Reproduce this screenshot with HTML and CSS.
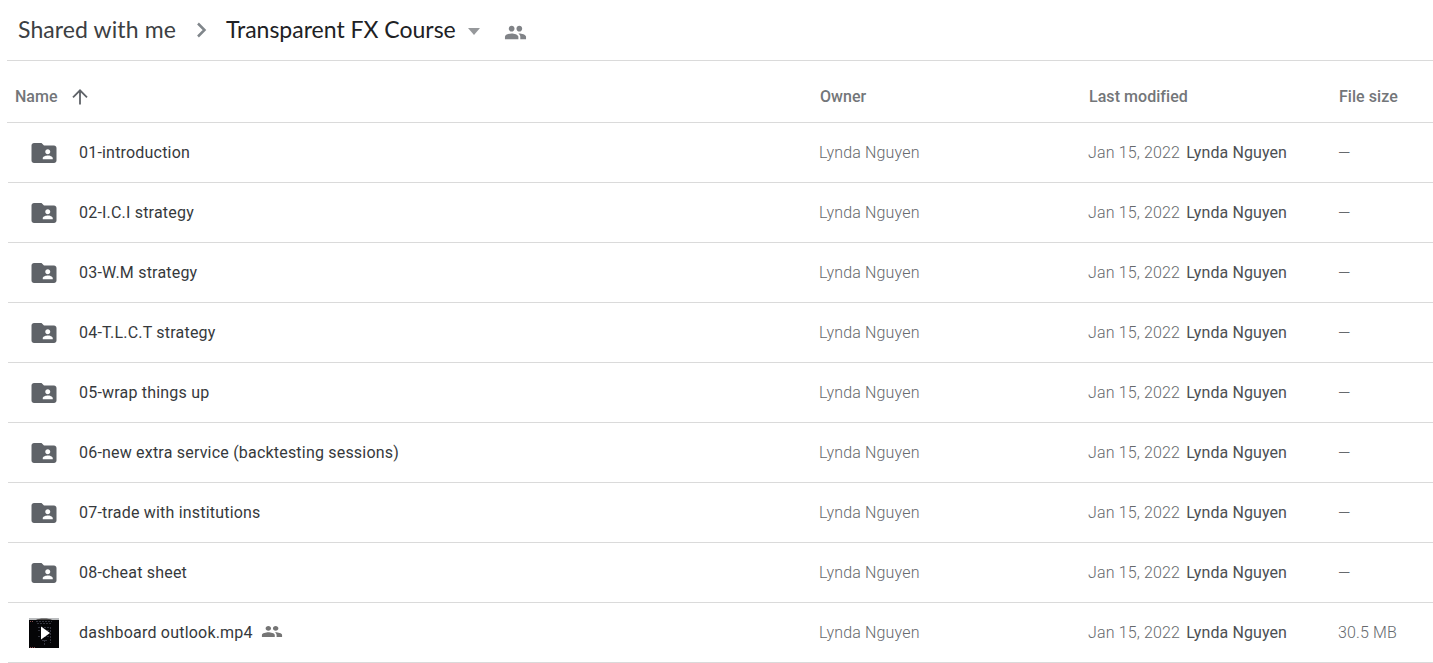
FILE: index.html
```html
<!DOCTYPE html>
<html lang="en">
<head>
    <meta charset="UTF-8">
    <meta name="viewport" content="width=device-width, initial-scale=1.0">
    <title>Transparent FX Course</title>
    <link rel="stylesheet" href="styles.css">
</head>
<body>
    <!-- shared icons -->
    <svg class="sprite">
        <symbol id="folder" viewBox="0 0 24 24">
            <path d="M20 6h-8l-2-2H4c-1.100 0-1.990.9-1.990 2L2 18c0 1.100.9 2 2 2h16c1.100 0 2-.9 2-2V8c0-1.100-.9-2-2-2zm-5 3c1.100 0 2 .9 2 2s-.9 2-2 2-2-.9-2-2 .9-2 2-2zm4 8h-8v-1c0-1.330 2.670-2 4-2s4 .67 4 2v1z"/>
        </symbol>
        <symbol id="people" viewBox="0 0 24 24" preserveAspectRatio="none">
            <path d="M16 11c1.660 0 2.990-1.340 2.990-3S17.660 5 16 5s-3 1.340-3 3 1.340 3 3 3zm-8 0c1.660 0 2.990-1.340 2.990-3S9.660 5 8 5 5 6.340 5 8s1.340 3 3 3zm0 2c-2.330 0-7 1.170-7 3.500V19h14v-2.500c0-2.330-4.670-3.500-7-3.500zm8 0c-.29 0-.62.02-.97.05 1.160.84 1.970 1.970 1.970 3.450V19h6v-2.500c0-2.330-4.670-3.500-7-3.500z"/>
        </symbol>
    </svg>

    <div class="breadcrumb">
        <span class="crumb">Shared with me</span>
        <svg class="chevron" viewBox="0 0 12 16"><path d="M2 1.500l6.500 6.500L2 14.500"/></svg>
        <span class="crumb current">Transparent FX Course</span>
        <svg class="caret" viewBox="0 0 12 7"><path d="M0 0h12L6 7z"/></svg>
        <svg class="people"><use href="#people"/></svg>
    </div>

    <div class="files">
        <div class="row head">
            <div class="name">Name
                <svg class="arrow" viewBox="0 0 16 16"><path d="M8 15.500V1.500M1 8.300l7-7 7 7"/></svg>
            </div>
            <div class="owner">Owner</div>
            <div class="modified">Last modified</div>
            <div class="size">File size</div>
        </div>
        <div class="row">
            <div class="name"><svg class="folder"><use href="#folder"/></svg><span>01-introduction</span></div>
            <div class="owner">Lynda Nguyen</div>
            <div class="modified">Jan 15, 2022 <span class="by">Lynda Nguyen</span></div>
            <div class="size"><span class="dash">—</span></div>
        </div>
        <div class="row">
            <div class="name"><svg class="folder"><use href="#folder"/></svg><span>02-I.C.I strategy</span></div>
            <div class="owner">Lynda Nguyen</div>
            <div class="modified">Jan 15, 2022 <span class="by">Lynda Nguyen</span></div>
            <div class="size"><span class="dash">—</span></div>
        </div>
        <div class="row">
            <div class="name"><svg class="folder"><use href="#folder"/></svg><span>03-W.M strategy</span></div>
            <div class="owner">Lynda Nguyen</div>
            <div class="modified">Jan 15, 2022 <span class="by">Lynda Nguyen</span></div>
            <div class="size"><span class="dash">—</span></div>
        </div>
        <div class="row">
            <div class="name"><svg class="folder"><use href="#folder"/></svg><span>04-T.L.C.T strategy</span></div>
            <div class="owner">Lynda Nguyen</div>
            <div class="modified">Jan 15, 2022 <span class="by">Lynda Nguyen</span></div>
            <div class="size"><span class="dash">—</span></div>
        </div>
        <div class="row">
            <div class="name"><svg class="folder"><use href="#folder"/></svg><span>05-wrap things up</span></div>
            <div class="owner">Lynda Nguyen</div>
            <div class="modified">Jan 15, 2022 <span class="by">Lynda Nguyen</span></div>
            <div class="size"><span class="dash">—</span></div>
        </div>
        <div class="row">
            <div class="name"><svg class="folder"><use href="#folder"/></svg><span>06-new extra service (backtesting sessions)</span></div>
            <div class="owner">Lynda Nguyen</div>
            <div class="modified">Jan 15, 2022 <span class="by">Lynda Nguyen</span></div>
            <div class="size"><span class="dash">—</span></div>
        </div>
        <div class="row">
            <div class="name"><svg class="folder"><use href="#folder"/></svg><span>07-trade with institutions</span></div>
            <div class="owner">Lynda Nguyen</div>
            <div class="modified">Jan 15, 2022 <span class="by">Lynda Nguyen</span></div>
            <div class="size"><span class="dash">—</span></div>
        </div>
        <div class="row">
            <div class="name"><svg class="folder"><use href="#folder"/></svg><span>08-cheat sheet</span></div>
            <div class="owner">Lynda Nguyen</div>
            <div class="modified">Jan 15, 2022 <span class="by">Lynda Nguyen</span></div>
            <div class="size"><span class="dash">—</span></div>
        </div>
        <div class="row">
            <div class="name">
                <!-- video thumbnail -->
                <svg class="thumb" viewBox="0 0 30 30">
                    <path fill="#050507" d="M0 0h30v30H0z"/>
                    <path fill="#b9bbbd" d="M0 0h30v2H0z"/>
                    <path fill="#4c4a48" d="M7 2c2-2 14-2 16 0z"/>
                    <path stroke="#34353f" stroke-dasharray="2 1" d="M7 3.500h16M8 5.500h14M9 9.500h12M9 12.500h3M18 12.500h4M9 18.500h12M13 22.500h5M15.500 22v5M21.500 9v16"/>
                    <path stroke="#8a5050" stroke-dasharray="1 1" d="M1 3.500h4M1 29.500h5"/>
                    <path fill="#fff" d="M12 8.500l9 6.500-9 6.500z"/>
                </svg>
                <span>dashboard outlook.mp4</span>
                <svg class="people small"><use href="#people"/></svg>
            </div>
            <div class="owner">Lynda Nguyen</div>
            <div class="modified">Jan 15, 2022 <span class="by">Lynda Nguyen</span></div>
            <div class="size">30.5 MB</div>
        </div>
    </div>
</body>
</html>
```
FILE: styles.css
```css
body {
    margin: 0;
    background-color: #fff;
    font-family: Roboto, Arial, sans-serif;
    font-size: 16px;
    overflow: hidden;
}

.sprite {
    display: none;
}

.breadcrumb {
    display: flex;
    align-items: center;
    box-sizing: border-box;
    height: 61px;
    margin-left: 7px;
    padding-left: 11px;
    border-bottom: 1px solid #dadada;
    font-family: Lato, sans-serif;
    font-size: 23px;
    color: #3c4043;
    white-space: nowrap;
}

.crumb {
    margin-top: -2px;
    letter-spacing: 0.1px;
}

.crumb.current {
    color: #202124;
    letter-spacing: 0;
}

.chevron {
    width: 12px;
    height: 16px;
    margin: 0 18px 0 20px;
    fill: none;
    stroke: #80868b;
    stroke-width: 2.5;
}

.caret {
    width: 12px;
    height: 7px;
    margin: 2px 24px 0 12px;
    fill: #96989b;
}

.people {
    width: 23px;
    height: 23px;
    margin-top: 5px;
    fill: #808387;
}

.row {
    display: grid;
    grid-template-columns: 811px 269px 250px 1fr;
    align-items: center;
    box-sizing: border-box;
    height: 60px;
    margin-left: 8px;
    border-bottom: 1px solid #dadada;
    color: #66696d;
    font-weight: 300;
    letter-spacing: 0.15px;
    white-space: nowrap;
}

.row.head {
    height: 62px;
    margin-left: 7px;
    padding-left: 2px;
    padding-top: 9px;
    color: #737679;
    font-weight: 500;
    letter-spacing: 0.05px;
}

.name {
    display: flex;
    align-items: center;
    color: #36393c;
    font-weight: 400;
    letter-spacing: 0.2px;
}

.head .name {
    padding-left: 6px;
    color: #737679;
    font-weight: 500;
    letter-spacing: 0;
}

.arrow {
    width: 16px;
    height: 16px;
    margin: 1px 0 0 15px;
    fill: none;
    stroke: #5f6368;
    stroke-width: 1.8;
}

.folder {
    width: 30px;
    height: 30px;
    margin: 1px 20px 0 21px;
    fill: #5f6368;
}

.thumb {
    width: 30px;
    height: 30px;
    margin: 1px 20px 0 21px;
    fill: none;
}

.people.small {
    width: 22px;
    height: 19px;
    margin: -2px 0 0 8px;
    fill: #757575;
}

.by {
    margin-left: 2px;
    color: #4c4f53;
    font-weight: 400;
    letter-spacing: 0.1px;
}

.dash {
    display: inline-block;
    padding-top: 2px;
}
```
